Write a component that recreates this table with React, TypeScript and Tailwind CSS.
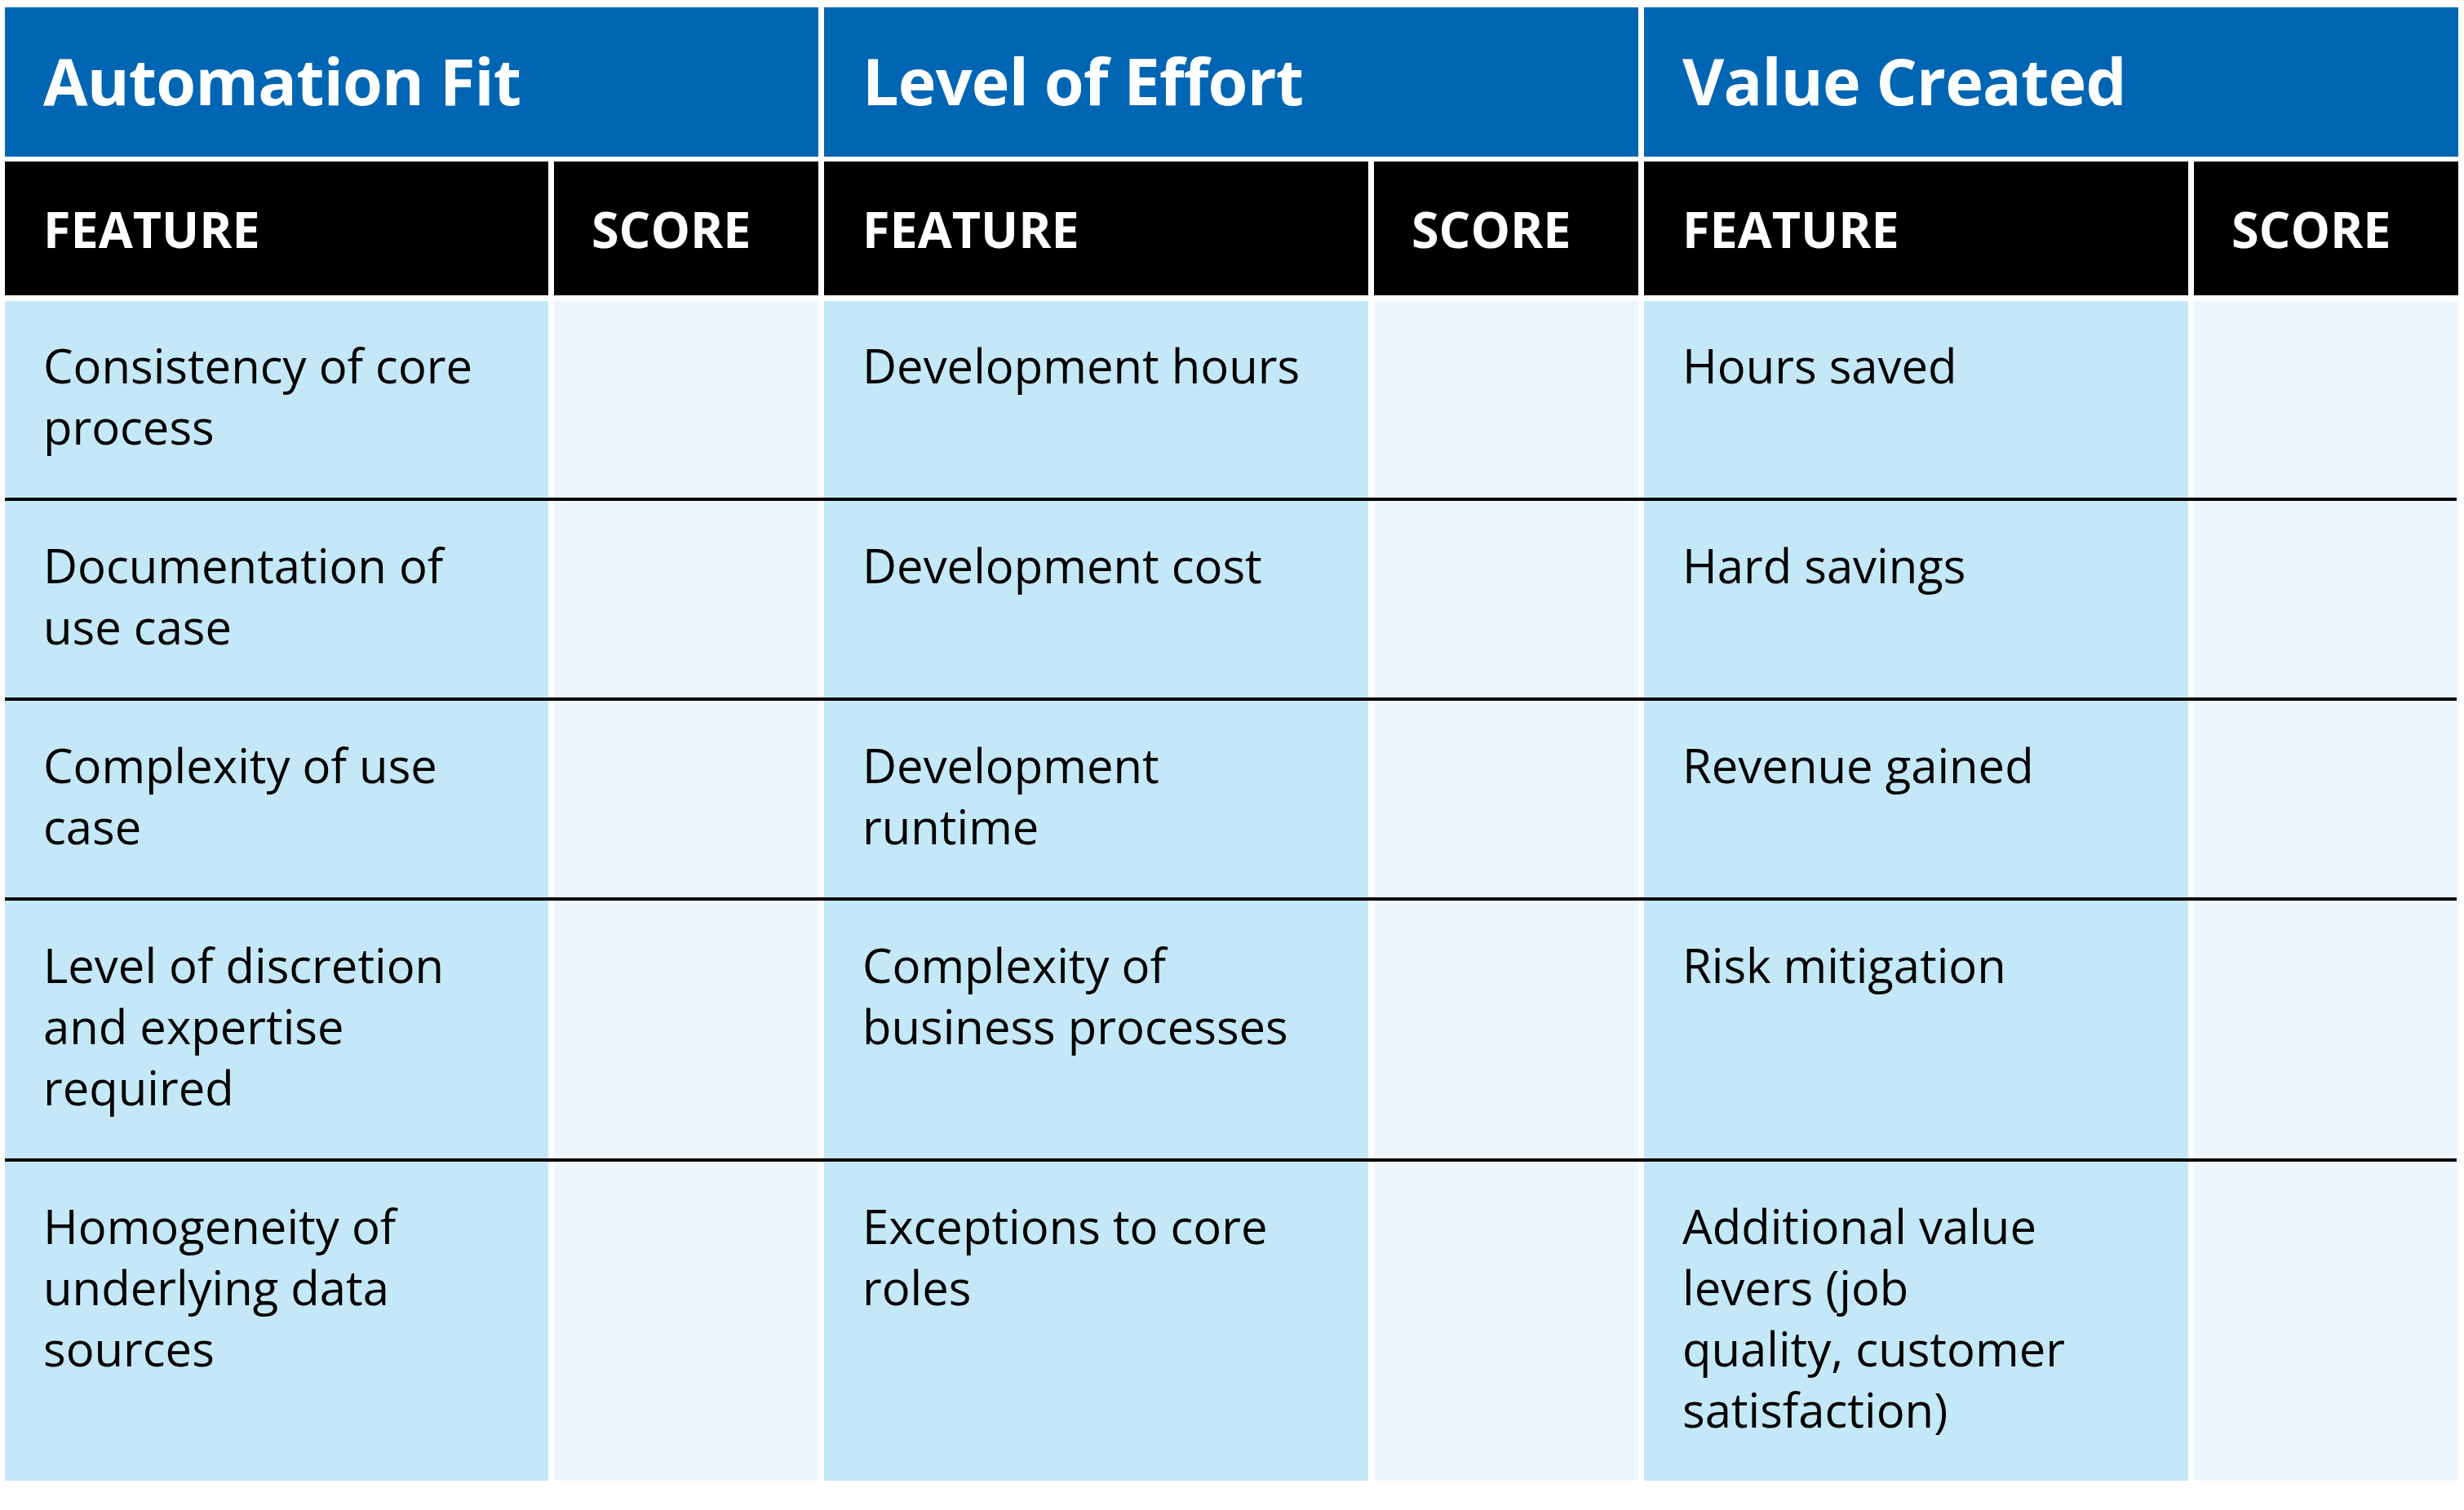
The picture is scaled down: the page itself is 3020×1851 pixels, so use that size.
const groups = [
  {
    title: 'Automation Fit',
    rows: [
      ['Consistency of core', 'process'],
      ['Documentation of', 'use case'],
      ['Complexity of use', 'case'],
      ['Level of discretion', 'and expertise', 'required'],
      ['Homogeneity of', 'underlying data', 'sources'],
    ],
  },
  {
    title: 'Level of Effort',
    rows: [
      ['Development hours'],
      ['Development cost'],
      ['Development', 'runtime'],
      ['Complexity of', 'business processes'],
      ['Exceptions to core', 'roles'],
    ],
  },
  {
    title: 'Value Created',
    rows: [
      ['Hours saved'],
      ['Hard savings'],
      ['Revenue gained'],
      ['Risk mitigation'],
      ['Additional value', 'levers (job', 'quality, customer', 'satisfaction)'],
    ],
  },
];

const cols = 'grid grid-cols-[666px_324px_667px_324px_667px_324px] gap-x-[7px]';

export default function App() {
  return (
    <div className="min-h-screen w-full bg-white pl-[6px] pt-[9px] font-['Open_Sans',sans-serif]">
      <div className="w-[3005px]">
        <div className={cols}>
          {groups.map(g => (
            <div key={g.title} className="col-span-2 h-[183px] bg-[#0066b3] flex items-center px-[47px] pb-[4px]">
              <h2 className="text-[79px] font-bold text-white tracking-[-0.01em] leading-none">{g.title}</h2>
            </div>
          ))}
        </div>

        <div className={`${cols} mt-[6px]`}>
          {groups.map(g => (
            <div key={g.title} className="contents">
              <div className="h-[164px] bg-black flex items-center px-[47px]">
                <span className="text-[61px] font-bold text-white leading-none">FEATURE</span>
              </div>
              <div className="h-[164px] bg-black flex items-center px-[46px]">
                <span className="text-[61px] font-bold text-white leading-none">SCORE</span>
              </div>
            </div>
          ))}
        </div>

        <div className="mt-[7px]">
          {groups[0].rows.map((_, i) => (
            <div key={i}>
              {i > 0 && <div className="h-[4px] bg-black" />}
              <div className={cols}>
                {groups.map(g => (
                  <div key={g.title} className="contents">
                    <div className="bg-[#c5e8f8] pl-[47px] pr-4 pt-[41px] pb-[50px]">
                      {g.rows[i].map(line => (
                        <div key={line} className="text-[58px] leading-[75px] text-black whitespace-nowrap">
                          {line}
                        </div>
                      ))}
                    </div>
                    <div className="bg-[#eef7fe]" />
                  </div>
                ))}
              </div>
            </div>
          ))}
        </div>
      </div>
    </div>
  );
}
